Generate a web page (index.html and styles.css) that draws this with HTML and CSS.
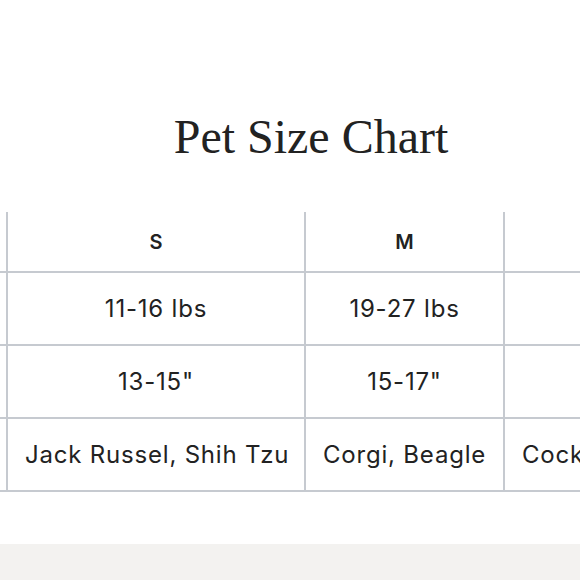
FILE: index.html
```html
<!DOCTYPE html>
<html lang="en">
<head>
<meta charset="utf-8">
<title>Pet Size Chart</title>
<link rel="stylesheet" href="styles.css">
</head>
<body>
<main class="page">
  <h1 class="title">Pet Size Chart</h1>
  <div class="chart-wrap">
    <table class="chart">
      <colgroup>
        <col class="col-label">
        <col class="col-s">
        <col class="col-m">
        <col class="col-l">
      </colgroup>
      <thead>
        <tr class="head-row">
          <th>Size</th>
          <th>S</th>
          <th>M</th>
          <th>L</th>
        </tr>
      </thead>
      <tbody>
        <tr>
          <td>Weight</td>
          <td>11-16 lbs</td>
          <td>19-27 lbs</td>
          <td>29-35 lbs</td>
        </tr>
        <tr>
          <td>Neck</td>
          <td>13-15"</td>
          <td>15-17"</td>
          <td>17-20"</td>
        </tr>
        <tr>
          <td>Breeds</td>
          <td>Jack Russel, Shih Tzu</td>
          <td>Corgi, Beagle</td>
          <td>Cocker Spaniel, Bulldog</td>
        </tr>
      </tbody>
    </table>
  </div>
  <div class="footer-band"></div>
</main>
</body>
</html>
```

FILE: styles.css
```css
html, body {
  margin: 0;
  padding: 0;
  background: #ffffff;
}

.page {
  width: 580px;
  height: 580px;
  overflow: hidden;
  display: flex;
  flex-direction: column;
}

.title {
  margin: 113px 0 0 0;
  padding-left: 42px;
  font-family: "Liberation Serif", "DejaVu Serif", serif;
  font-weight: 400;
  font-size: 48px;
  line-height: 48px;
  color: #222222;
  text-align: center;
}

.chart-wrap {
  margin-top: 51px;
  margin-left: -154px;
  margin-bottom: 52px;
}

.chart {
  border-collapse: collapse;
  table-layout: fixed;
  width: 971px;
  font-family: "Inter", "Liberation Sans", sans-serif;
  color: #222222;
}

.col-label { width: 160px; }
.col-s { width: 298px; }
.col-m { width: 199px; }
.col-l { width: 314px; }

.chart th,
.chart td {
  border: 2px solid #c6cad0;
  padding: 0 17px;
  text-align: center;
  white-space: nowrap;
}

.chart thead th {
  border-top: 0;
  height: 59px;
  font-size: 20px;
  font-weight: 600;
}

.chart td {
  height: 71px;
  font-size: 24px;
  font-weight: 400;
  letter-spacing: 0.8px;
}

.footer-band {
  flex: 1;
  background: #f3f2f0;
}
```
